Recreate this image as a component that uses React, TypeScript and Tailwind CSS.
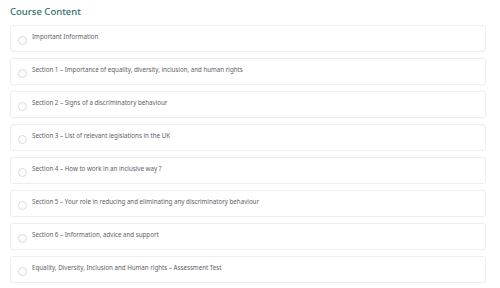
import React from "react";

const SECTIONS: string[] = [
  "Important Information",
  "Section 1 – Importance of equality, diversity, inclusion, and human rights",
  "Section 2 – Signs of a discriminatory behaviour",
  "Section 3 – List of relevant legislations in the UK",
  "Section 4 – How to work in an inclusive way ?",
  "Section 5 – Your role in reducing and eliminating any discriminatory behaviour",
  "Section 6 – Information, advice and support",
  "Equality, Diversity, Inclusion and Human rights – Assessment Test",
];

const LessonRow: React.FC<{ title: string }> = ({ title }) => {
  return (
    <div className="flex items-center h-[27px] border border-[#eceef2] rounded-[3px] pl-[7px] bg-white">
      <span className="w-[9px] h-[9px] rounded-full border border-[#d6dade] mt-[3px] shrink-0" />
      <span className="ml-[5px] -mt-[2px] text-[6.2px] text-[#5c6066] leading-none">
        {title}
      </span>
    </div>
  );
};

const App: React.FC = () => {
  return (
    <div
      className="w-[500px] h-[288px] bg-white pl-[10px] pr-[14px] pt-[5px]"
      style={{ fontFamily: "'Noto Sans', 'Open Sans', sans-serif" }}
    >
      <h2 className="text-[9.5px] leading-[14px] font-medium text-[#2f6f6c] mb-[6px]">
        Course Content
      </h2>
      <div className="flex flex-col gap-[6px]">
        {SECTIONS.map((s) => (
          <LessonRow key={s} title={s} />
        ))}
      </div>
    </div>
  );
};

export default App;
